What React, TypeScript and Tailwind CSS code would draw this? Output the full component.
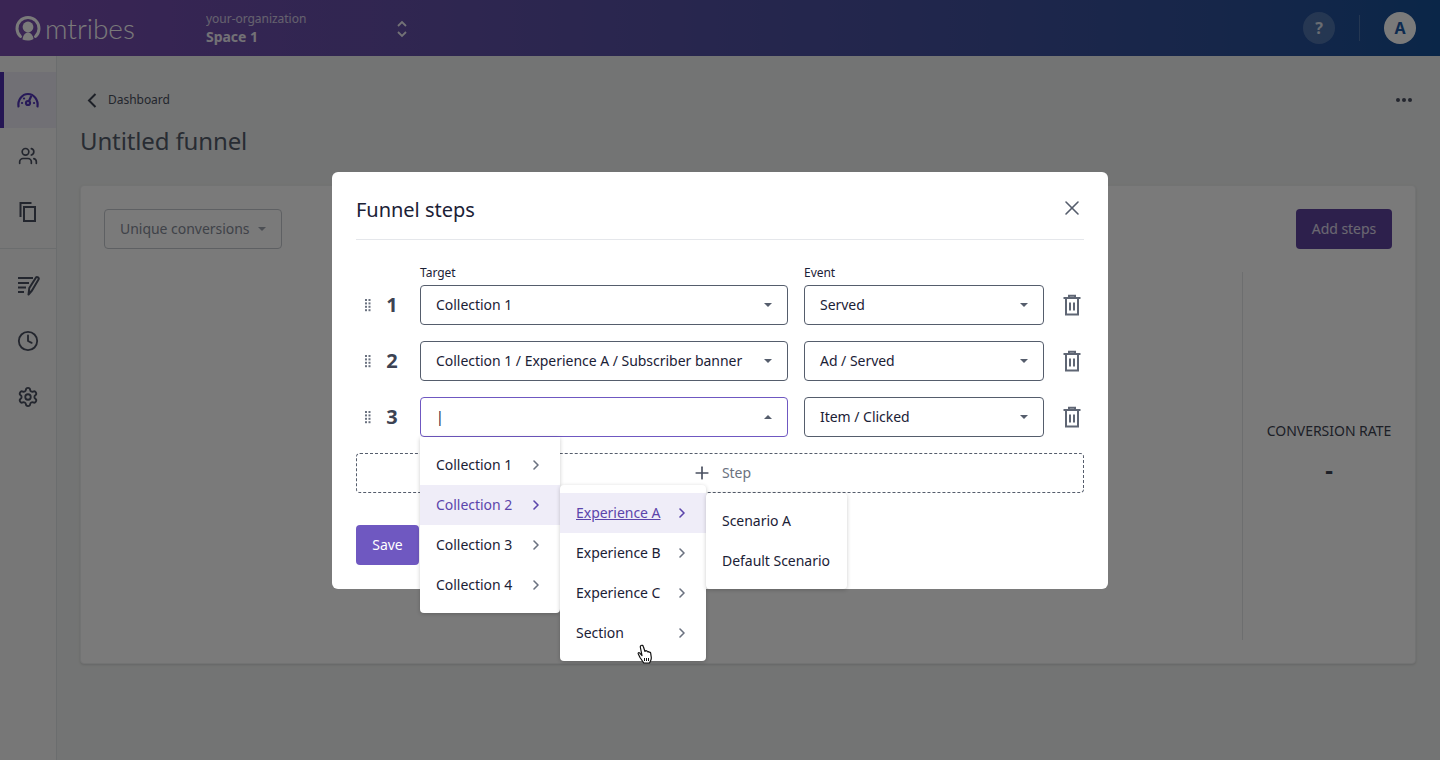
import React from "react";
import { ChevronRight, Users, Clock, Settings, X, Plus } from "lucide-react";

const font = { fontFamily: '"Noto Sans", "Open Sans", sans-serif' };

function Caret({ up = false, cls = "" }: { up?: boolean; cls?: string }) {
  return (
    <svg width="8" height="4" viewBox="0 0 8 4" className={cls}>
      <path d={up ? "M0 4 L4 0 L8 4 Z" : "M0 0 L4 4 L8 0 Z"} fill="currentColor" />
    </svg>
  );
}

function Select({ text, width, focus = false, label }: { text: string; width: string; focus?: boolean; label?: string }) {
  return (
    <div className={`relative shrink-0 ${width}`}>
      {label && <div className="absolute left-0 top-[-20px] text-xs leading-[16px] text-[#1b2136]">{label}</div>}
      <div className={`flex h-10 items-center justify-between rounded border bg-white pl-[15px] pr-[15px] text-sm text-[#1b2136] ${focus ? "border-[#6f58c1]" : "border-[#555d6c]"}`}>
        <span>{text}</span>
        <Caret up={focus} cls="text-[#555d6c]" />
      </div>
    </div>
  );
}

function Grip() {
  return (
    <svg width="8" height="14" viewBox="0 0 8 14" className="text-[#6b7280]">
      {[0, 1].map((c) =>
        [0, 1, 2, 3].map((r) => <rect key={`${c}${r}`} x={1 + c * 3.5} y={1 + r * 3.4} width="2" height="2" fill="currentColor" />)
      )}
    </svg>
  );
}

function Trash() {
  return (
    <svg width="24" height="24" viewBox="0 0 24 24" fill="none" stroke="#5f6674" strokeWidth="2">
      <path d="M3.500 5h17M9 5V2.800h6V5M6 5v16.500h12V5M10 9.500v8M14 9.500v8" />
    </svg>
  );
}

function Row({ n, target, event, focus, labels }: { n: number; target: string; event: string; focus?: boolean; labels?: boolean }) {
  return (
    <div className="flex items-center">
      <div className="flex w-6 justify-center"><Grip /></div>
      <div className="w-6 text-center text-xl font-bold leading-none text-[#3d4353]">{n}</div>
      <div className="ml-4 flex gap-4">
        <Select text={target} width="w-[368px]" focus={focus} label={labels ? "Target" : undefined} />
        <Select text={event} width="w-[240px]" label={labels ? "Event" : undefined} />
      </div>
      <div className="ml-4 flex w-6 justify-center"><Trash /></div>
    </div>
  );
}

function MenuItem({ text, active, chevron = true, underline }: { text: string; active?: boolean; chevron?: boolean; underline?: boolean }) {
  return (
    <div className={`flex h-10 items-center justify-between whitespace-nowrap pl-4 pr-4 text-sm ${active ? "bg-[#efedf8] text-[#5b45ab]" : "text-[#1b2136]"}`}>
      <span className={underline ? "underline" : ""}>{text}</span>
      {chevron && <ChevronRight size={16} strokeWidth={2.400} className={active ? "text-[#5b45ab]" : "text-[#6b7280]"} />}
    </div>
  );
}

function Gauge() {
  return (
    <svg width="24" height="24" viewBox="0 0 24 24" fill="none" stroke="#5236b8" strokeWidth="2.200" strokeLinecap="round">
      <path d="M2.500 18.500C1.500 12 6 6 12 6s10.500 6 9.500 12.500" />
      <circle cx="12" cy="15" r="2" />
      <path d="M13 13l2-4.500M6 15h.1M18 15h.1M8 10.500h.1" />
    </svg>
  );
}

function CopyIcon() {
  return (
    <svg width="24" height="24" viewBox="0 0 24 24" fill="none" stroke="#4a5060" strokeWidth="2">
      <rect x="8" y="7" width="11" height="14" />
      <path d="M4.500 17V3h11" />
    </svg>
  );
}

function PenList() {
  return (
    <svg width="24" height="24" viewBox="0 0 24 24" fill="none" stroke="#4a5060" strokeWidth="2" strokeLinejoin="round">
      <path d="M2 5h15M2 10h11M2 14.500h8M2 19h6" />
      <path d="M12.500 21.500l.8-6.500L20 4.500c1-1.200 3.500.3 2.500 2L16 17.500z" />
    </svg>
  );
}

function Logo() {
  return (
    <svg width="26" height="26" viewBox="0 0 26 26" fill="none">
      <path d="M5.500 21.500A11 11 0 1 1 20.500 21.500" stroke="#ffffff" strokeWidth="3" strokeLinecap="round" />
      <circle cx="13" cy="12" r="5.400" fill="#ffffff" />
      <path d="M7.500 24.500c.5-4.500 3-7 5.500-7s5 2.500 5.500 6.500c-3.500 2-7.500 2-11 .5z" fill="#ffffff" />
    </svg>
  );
}

function HandCursor() {
  return (
    <svg width="16" height="20" viewBox="0 0 16 20" className="absolute left-[637px] top-[644px]">
      <path d="M4 1.500c1-.6 2 0 2.300 1L8 7.500l.5-.7c.7-.4 1.400 0 1.600.5l.3.500c.6-.5 1.500-.2 1.700.5.700-.3 1.500.1 1.600 1l.6 4.200c.1 1.300-.2 2.300-.7 3.300L12.500 19H6.800L3 13.500 1.200 9.800c-.3-.9.700-1.500 1.400-.9L5 11.500 3.300 3c-.1-.6.200-1.200.7-1.500z" fill="#ffffff" stroke="#111111" strokeWidth="1.200" strokeLinejoin="round" />
      <path d="M7.500 14v3M9.500 14v3M11.500 14v3" stroke="#111111" strokeWidth="1" />
    </svg>
  );
}

export default function App() {
  return (
    <div style={font} className="relative h-[760px] w-[1440px] overflow-hidden bg-[#f1f3f2] tracking-[-0.03px]">
      <header className="flex h-14 items-center bg-gradient-to-r from-[#7a4eb0] to-[#155096] pl-[15px] pr-[24px] text-white">
        <div className="flex w-[191px] items-center gap-[4px]">
          <Logo />
          <span className="text-[28px] font-light leading-none" style={{ fontFamily: '"Lato", sans-serif' }}>mtribes</span>
        </div>
        <div className="w-[191px] pt-[2px]">
          <div className="text-xs leading-4 opacity-70">your-organization</div>
          <div className="text-sm font-bold leading-5 opacity-90">Space 1</div>
        </div>
        <svg width="10" height="18" viewBox="0 0 10 18" fill="none" stroke="#ffffff" strokeWidth="1.800" strokeOpacity="0.9" className="mt-[2px]">
          <path d="M1 6l4-4 4 4M1 12l4 4 4-4" />
        </svg>
        <div className="ml-auto flex items-center">
          <div className="flex h-8 w-8 items-center justify-center rounded-full bg-white/20 text-base font-bold text-white/80">?</div>
          <div className="mx-6 h-[26px] w-px bg-white/20" />
          <div className="flex h-8 w-8 items-center justify-center rounded-full bg-white text-base font-bold text-[#1c5aa8]">A</div>
        </div>
      </header>
      <div className="flex h-[704px]">
        <aside className="flex w-[57px] shrink-0 flex-col border-r border-[#dfe3e6] bg-[#f8f8f8] pt-4 text-[#4a5060]">
          <div className="flex h-14 items-center justify-center border-l-4 border-[#4f2fb0] bg-[#eceaf5] pr-1"><Gauge /></div>
          <div className="flex h-14 items-center justify-center"><Users size={20} strokeWidth={2} /></div>
          <div className="flex h-14 items-center justify-center"><CopyIcon /></div>
          <div className="my-2 border-t border-[#dfe3e6]" />
          <div className="flex h-14 items-center justify-center"><PenList /></div>
          <div className="flex h-14 items-center justify-center"><Clock size={22} strokeWidth={2} /></div>
          <div className="flex h-14 items-center justify-center"><Settings size={22} strokeWidth={2} /></div>
        </aside>
        <main className="flex-1 pl-[23px] pr-6">
          <div className="mt-[33px] flex h-[22px] items-center justify-between pl-[7px]">
            <div className="flex items-center gap-[11px] text-xs text-[#4a5060]">
              <svg width="10" height="15" viewBox="0 0 10 15" fill="none" stroke="#3d4353" strokeWidth="2">
                <path d="M8.500 1 L2 7.500 L8.500 14" />
              </svg>
              <span>Dashboard</span>
            </div>
            <div className="flex gap-[2px] pr-[4px]">
              <span className="h-1 w-1 rounded-full bg-[#4a5060]" /><span className="h-1 w-1 rounded-full bg-[#4a5060]" /><span className="h-1 w-1 rounded-full bg-[#4a5060]" />
            </div>
          </div>
          <h1 className="mt-[14px] text-2xl font-normal leading-[32px] tracking-[-0.13px] text-[#555d6c]">Untitled funnel</h1>
          <section className="mt-[28px] h-[479px] rounded border border-[#eef0f1] bg-white shadow-sm">
            <div className="mt-[23px] flex h-10 items-center justify-between px-[23px]">
              <button className="flex h-10 w-[178px] items-center gap-2 rounded border border-[#c4c8cf] pl-[15px] text-sm text-[#858b98]">
                Unique conversions <Caret cls="text-[#a0a5b0]" />
              </button>
              <button className="flex h-10 w-24 items-center justify-center rounded bg-[#5f44a0] text-sm text-white/80">Add steps</button>
            </div>
            <div className="mt-[23px] flex justify-end">
              <div className="flex h-[368px] w-[173px] flex-col items-center border-l border-[#e4e6e9] pt-[149px] text-sm text-[#3d4353]">
                <span>CONVERSION RATE</span>
                <span className="mt-[13px] text-2xl font-bold leading-8">-</span>
              </div>
            </div>
          </section>
        </main>
      </div>

      {/* dim */}
      <div className="absolute inset-0 bg-black/[0.52]" />

      {/* modal */}
      <div className="absolute left-[332px] top-[172px] h-[417px] w-[776px] rounded-md bg-white px-6 text-[#1b2136]">
        <div className="flex h-[68px] items-center justify-between border-b border-[#e5e7eb] pt-2">
          <h2 className="text-xl font-normal">Funnel steps</h2>
          <X size={24} strokeWidth={1.6} className="mb-1 text-[#555d6c]" />
        </div>
        <div className="mt-[45px] flex flex-col gap-4">
          <Row n={1} target="Collection 1" event="Served" labels />
          <Row n={2} target="Collection 1 / Experience A / Subscriber banner" event="Ad / Served" />
          <Row n={3} target="|" event="Item / Clicked" focus />
        </div>
        <div className="mt-4 flex h-10 items-center justify-center gap-[10px] rounded border border-dashed border-[#555d6c] pl-[3px] text-sm text-[#6b7280]">
          <Plus size={20} strokeWidth={2} className="text-[#4a5060]" />
          <span>Step</span>
        </div>
        <button className="mt-8 h-10 w-[63px] rounded bg-[#6f58c1] text-sm text-white">Save</button>

        {/* cascading menu */}
        <div className="absolute left-[88px] top-[265px] w-[140px] rounded-b bg-white py-2 shadow-[0_1px_4px_rgba(0,0,0,0.2)]">
          <MenuItem text="Collection 1" />
          <MenuItem text="Collection 2" active />
          <MenuItem text="Collection 3" />
          <MenuItem text="Collection 4" />
          <div className="absolute left-full top-[48px] w-[146px] rounded bg-white py-2 shadow-[0_1px_4px_rgba(0,0,0,0.2)]">
            <MenuItem text="Experience A" active underline />
            <MenuItem text="Experience B" />
            <MenuItem text="Experience C" />
            <MenuItem text="Section" />
            <div className="absolute left-full top-2 w-[141px] rounded bg-white py-2 shadow-[0_1px_4px_rgba(0,0,0,0.2)]">
              <MenuItem text="Scenario A" chevron={false} />
              <MenuItem text="Default Scenario" chevron={false} />
            </div>
          </div>
        </div>
      </div>
      <HandCursor />
    </div>
  );
}
